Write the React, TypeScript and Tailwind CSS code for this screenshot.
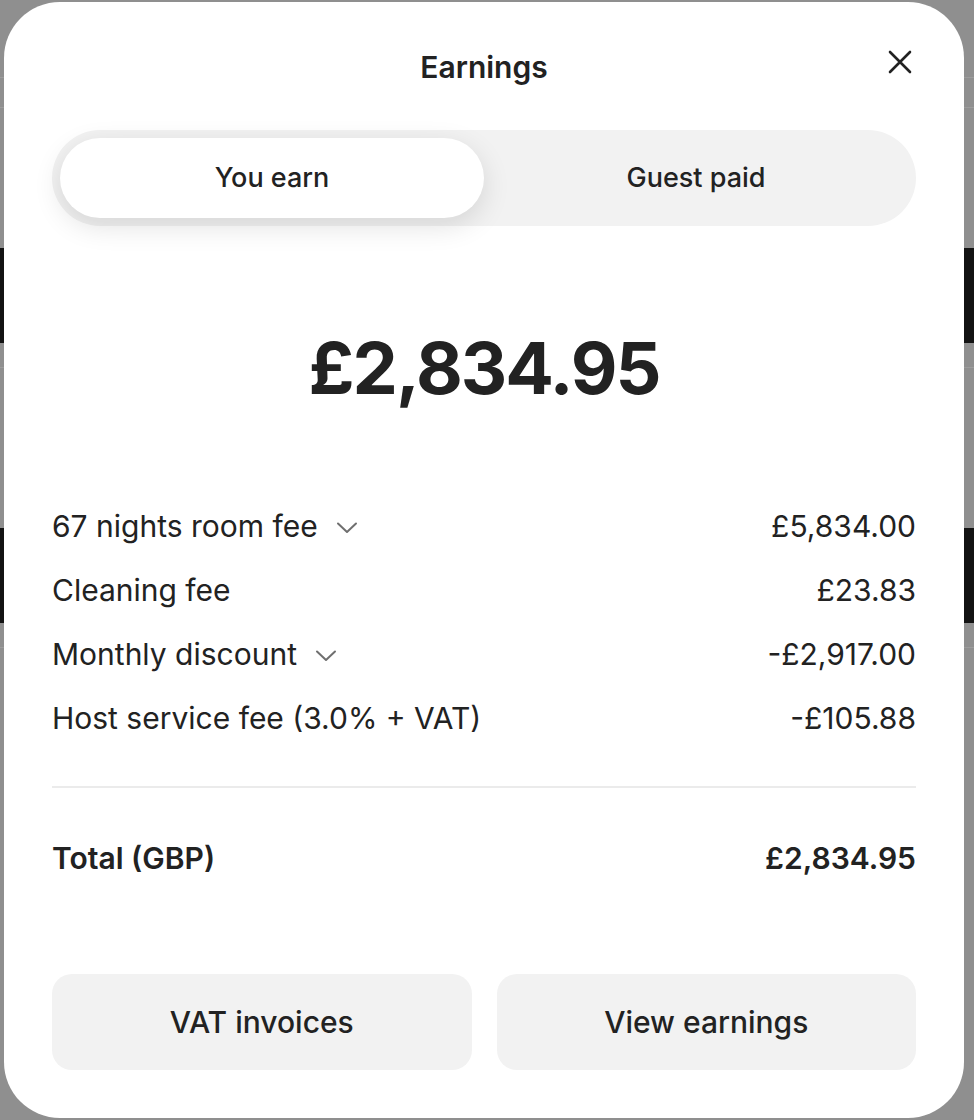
import React from 'react';

const rows = [
    { label: '67 nights room fee', value: '£5,834.00', more: true },
    { label: 'Cleaning fee', value: '£23.83', more: false },
    { label: 'Monthly discount', value: '-£2,917.00', more: true },
    { label: 'Host service fee (3.0% + VAT)', value: '-£105.88', more: false },
];

function Chevron() {
    return (
        <svg width="22" height="14" viewBox="0 0 22 14" fill="none" className="ml-[18px] mt-1">
            <path d="M2 2.5 L11 11 L20 2.5" stroke="#6f6f6f" strokeWidth="2" strokeLinecap="round" strokeLinejoin="round" />
        </svg>
    );
}

export default function App() {
    return (
        <div className="relative w-[974px] h-[1120px] overflow-hidden bg-[#8f8f8f]" style={{ fontFamily: 'Inter, "Noto Sans", sans-serif' }}>
            {/* dimmed page behind the sheet */}
            <div className="flex flex-col">
                <div className="h-[77px]" />
                <div className="h-px bg-[#9c9c9c]" />
                <div className="h-[29px]" />
                <div className="h-px bg-[#9c9c9c]" />
                <div className="h-[140px]" />
                <div className="h-[95px] bg-[#121212]" />
                <div className="h-[24px]" />
                <div className="h-px bg-[#9c9c9c]" />
                <div className="h-[160px]" />
                <div className="h-[95px] bg-[#121212]" />
                <div className="h-[24px]" />
                <div className="h-px bg-[#9c9c9c]" />
            </div>

            {/* sheet */}
            <div className="absolute left-[4px] top-[2px] w-[960px] h-[1116px] bg-white rounded-[56px] flex flex-col px-[48px] text-[#222222]">
                <div className="relative flex items-center justify-center h-[128px] pt-[2px]">
                    <h1 className="text-[30px] font-semibold leading-none">Earnings</h1>
                    <button className="absolute right-[2px] top-[46px] w-[28px] h-[28px] flex items-center justify-center">
                        <svg width="24" height="24" viewBox="0 0 24 24" fill="none">
                            <path d="M2 2 L22 22 M22 2 L2 22" stroke="#222" strokeWidth="2.6" strokeLinecap="round" />
                        </svg>
                    </button>
                </div>

                <div className="flex h-[96px] rounded-full bg-[#f2f2f2] p-[8px]">
                    <div className="flex-1 flex items-center justify-center rounded-full bg-white shadow-[0_8px_28px_rgba(0,0,0,0.12)] text-[27px] font-medium">
                        You earn
                    </div>
                    <div className="flex-1 flex items-center justify-center text-[27px] font-medium">
                        Guest paid
                    </div>
                </div>

                <div className="flex justify-center pt-[100px] pb-[84px]">
                    <span className="text-[72px] font-bold leading-[84px] tracking-[-2px]">£2,834.95</span>
                </div>

                <div className="flex flex-col">
                    {rows.map((r) => (
                        <div key={r.label} className="flex items-center justify-between h-[64px] text-[30px]">
                            <div className="flex items-center">
                                <span>{r.label}</span>
                                {r.more && <Chevron />}
                            </div>
                            <span>{r.value}</span>
                        </div>
                    ))}
                </div>

                <div className="h-[2px] bg-[#ebebeb] mt-[36px]" />

                <div className="flex items-center justify-between h-[140px] text-[30px] font-semibold">
                    <span>Total (GBP)</span>
                    <span>£2,834.95</span>
                </div>

                <div className="flex gap-[25px] mt-[46px]">
                    <button className="flex-1 h-[96px] rounded-[20px] bg-[#f2f2f2] text-[30px] font-medium">VAT invoices</button>
                    <button className="flex-1 h-[96px] rounded-[20px] bg-[#f2f2f2] text-[30px] font-medium">View earnings</button>
                </div>
            </div>
        </div>
    );
}
